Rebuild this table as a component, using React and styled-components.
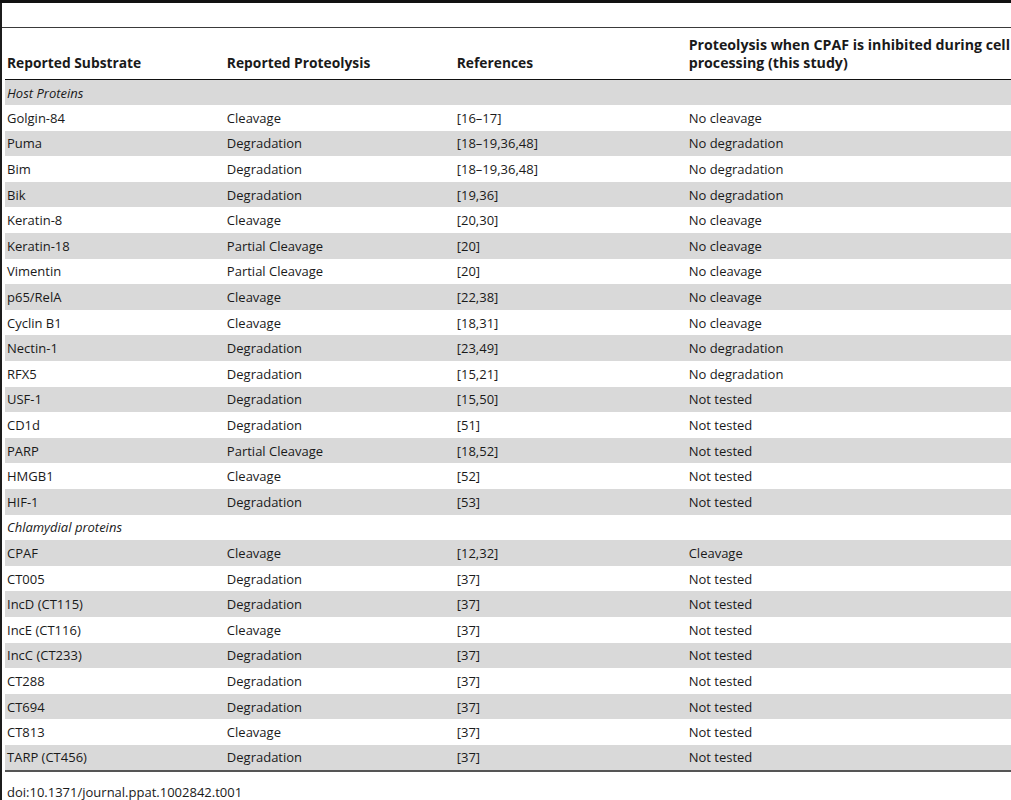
import React from 'react'
import styled, { createGlobalStyle } from 'styled-components'

const GlobalStyle = createGlobalStyle`
  html, body {
    margin: 0;
    padding: 0;
    background: #fff;
    overflow: hidden;
  }
  body {
    font-family: "Open Sans", "Noto Sans", sans-serif;
    color: #1a1a1a;
  }
`

const rows = [
  { group: 'Host Proteins' },
  ['Golgin-84', 'Cleavage', '[16–17]', 'No cleavage'],
  ['Puma', 'Degradation', '[18–19,36,48]', 'No degradation'],
  ['Bim', 'Degradation', '[18–19,36,48]', 'No degradation'],
  ['Bik', 'Degradation', '[19,36]', 'No degradation'],
  ['Keratin-8', 'Cleavage', '[20,30]', 'No cleavage'],
  ['Keratin-18', 'Partial Cleavage', '[20]', 'No cleavage'],
  ['Vimentin', 'Partial Cleavage', '[20]', 'No cleavage'],
  ['p65/RelA', 'Cleavage', '[22,38]', 'No cleavage'],
  ['Cyclin B1', 'Cleavage', '[18,31]', 'No cleavage'],
  ['Nectin-1', 'Degradation', '[23,49]', 'No degradation'],
  ['RFX5', 'Degradation', '[15,21]', 'No degradation'],
  ['USF-1', 'Degradation', '[15,50]', 'Not tested'],
  ['CD1d', 'Degradation', '[51]', 'Not tested'],
  ['PARP', 'Partial Cleavage', '[18,52]', 'Not tested'],
  ['HMGB1', 'Cleavage', '[52]', 'Not tested'],
  ['HIF-1', 'Degradation', '[53]', 'Not tested'],
  { group: 'Chlamydial proteins' },
  ['CPAF', 'Cleavage', '[12,32]', 'Cleavage'],
  ['CT005', 'Degradation', '[37]', 'Not tested'],
  ['IncD (CT115)', 'Degradation', '[37]', 'Not tested'],
  ['IncE (CT116)', 'Cleavage', '[37]', 'Not tested'],
  ['IncC (CT233)', 'Degradation', '[37]', 'Not tested'],
  ['CT288', 'Degradation', '[37]', 'Not tested'],
  ['CT694', 'Degradation', '[37]', 'Not tested'],
  ['CT813', 'Cleavage', '[37]', 'Not tested'],
  ['TARP (CT456)', 'Degradation', '[37]', 'Not tested'],
]

const Page = styled.div`
  width: 1020px;
  height: 800px;
  border-left: 2px solid #1c1c1c;
  display: flex;
  flex-direction: column;
  & > * {
    flex-shrink: 0;
  }
`

const TopRule = styled.div`
  height: 3px;
  background: #111;
  margin-left: -2px;
`

const Spacer = styled.div`
  height: 24px;
  border-bottom: 1px solid #3a3a3a;
`

const Table = styled.table`
  border-collapse: collapse;
  margin-left: 3px;
  table-layout: fixed;
  font-size: 13px;
  border-bottom: 2px solid #555;
`

const HeadCell = styled.th`
  width: ${p => p.w}px;
  height: 44px;
  padding: 0 2px 7px;
  text-align: left;
  vertical-align: bottom;
  font-size: ${p => p.size || 14}px;
  font-weight: 700;
  line-height: 18px;
  border-bottom: 1px solid #111;
  white-space: nowrap;
`

const Row = styled.tr`
  height: 25.6px;
  background: ${p => (p.shaded ? '#d9d9d9' : '#fff')};
`

const Cell = styled.td`
  padding: 0 2px;
  line-height: 18px;
  vertical-align: middle;
  white-space: nowrap;
  font-style: ${p => (p.italic ? 'italic' : 'normal')};
`

const Doi = styled.div`
  font-size: 13px;
  padding: 11px 0 0 5px;
`

const widths = [215, 225, 227, 330]

export default function App () {
  return (
    <Page>
      <GlobalStyle />
      <TopRule />
      <Spacer />
      <Table>
        <thead>
          <tr>
            <HeadCell w={widths[0]} size={13.8}>Reported Substrate</HeadCell>
            <HeadCell w={widths[1]} size={13.8}>Reported Proteolysis</HeadCell>
            <HeadCell w={widths[2]} size={13.8}>References</HeadCell>
            <HeadCell w={widths[3]} size={14.2}>
              Proteolysis when CPAF is inhibited during cell
              <br />
              processing (this study)
            </HeadCell>
          </tr>
        </thead>
        <tbody>
          {rows.map((r, i) => (
            <Row key={i} shaded={i % 2 === 0}>
              {r.group
                ? <Cell italic colSpan={4}>{r.group}</Cell>
                : r.map((c, j) => <Cell key={j}>{c}</Cell>)}
            </Row>
          ))}
        </tbody>
      </Table>
      <Doi>doi:10.1371/journal.ppat.1002842.t001</Doi>
    </Page>
  )
}
